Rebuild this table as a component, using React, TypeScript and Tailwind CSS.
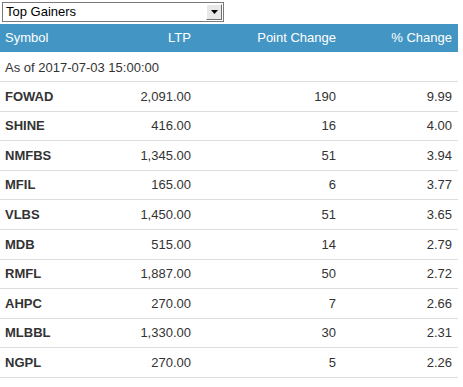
const rows = [
  ["FOWAD", "2,091.00", "190", "9.99"],
  ["SHINE", "416.00", "16", "4.00"],
  ["NMFBS", "1,345.00", "51", "3.94"],
  ["MFIL", "165.00", "6", "3.77"],
  ["VLBS", "1,450.00", "51", "3.65"],
  ["MDB", "515.00", "14", "2.79"],
  ["RMFL", "1,887.00", "50", "2.72"],
  ["AHPC", "270.00", "7", "2.66"],
  ["MLBBL", "1,330.00", "30", "2.31"],
  ["NGPL", "270.00", "5", "2.26"],
];

const cols = "grid grid-cols-[95px_100px_145px_118px]";

export default function App() {
  return (
    <div className="min-h-[387px] bg-white font-['Liberation_Sans',Arial,sans-serif] text-[13px] text-[#333]">
      <div className="pl-[2px] pt-[2px]">
        <div className="flex h-[20px] w-[222px] items-center border border-[#7a7a7a] bg-white">
          <span className="flex-1 pl-[3px] text-[13px] text-black">Top Gainers</span>
          <span className="mr-px flex h-[16px] w-[16px] items-center justify-center border border-t-white border-l-white border-r-[#707070] border-b-[#707070] bg-[#e8e8e8]">
            <svg width="7" height="4" viewBox="0 0 7 4">
              <path d="M0 0h7L3.5 4z" fill="#000" />
            </svg>
          </span>
        </div>
      </div>
      <div className="mt-[2px] w-[458px]">
        <div className={`${cols} h-[28px] items-center bg-[#4396c4] text-white`}>
          <div className="pl-[5px]">Symbol</div>
          <div className="pr-[4px] text-right">LTP</div>
          <div className="pr-[4px] text-right">Point Change</div>
          <div className="pr-[6px] text-right">% Change</div>
        </div>
        <div className="flex h-[30px] items-center border-b border-[#dddddd] pl-[5px] pt-[3px]">
          As of 2017-07-03 15:00:00
        </div>
        {rows.map((r) => (
          <div
            key={r[0]}
            className={`${cols} h-[29.6px] items-center border-b border-[#dddddd]`}
          >
            <div className="pl-[5px] font-bold">{r[0]}</div>
            <div className="pr-[4px] text-right">{r[1]}</div>
            <div className="pr-[4px] text-right">{r[2]}</div>
            <div className="pr-[6px] text-right">{r[3]}</div>
          </div>
        ))}
      </div>
    </div>
  );
}
